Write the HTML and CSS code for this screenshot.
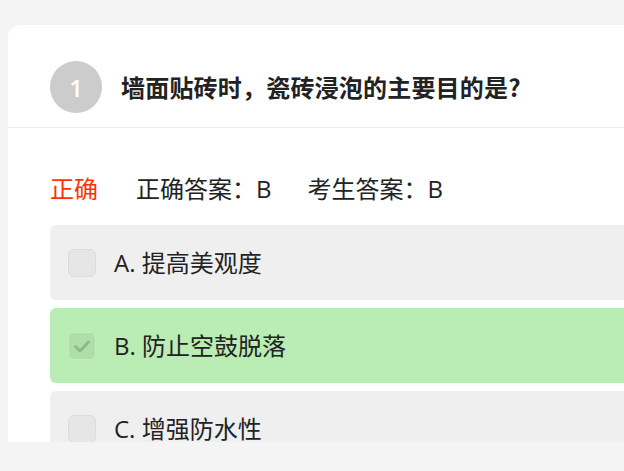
FILE: index.html
```html
<!DOCTYPE html>
<html lang="zh-CN">
<head>
<meta charset="utf-8">
<title>答题结果</title>
<link rel="stylesheet" href="styles.css">
</head>
<body>
<div class="viewport">
  <div class="card">
    <div class="q-head">
      <div class="q-num">1</div>
      <div class="q-title">墙面贴砖时，瓷砖浸泡的主要目的是?</div>
    </div>
    <div class="q-body">
      <div class="status">
        <span class="result">正确</span>
        <span class="answer">正确答案：B</span>
        <span class="answer">考生答案：B</span>
      </div>
      <div class="options">
        <div class="option">
          <span class="box"></span>
          <span class="label">A. 提高美观度</span>
        </div>
        <div class="option correct">
          <span class="box checked">
            <svg width="28" height="28" viewBox="0 0 28 28"><polyline points="7.5,14.5 12,19 20.5,10" fill="none" stroke="#8dbb87" stroke-width="3" stroke-linecap="round" stroke-linejoin="round"/></svg>
          </span>
          <span class="label">B. 防止空鼓脱落</span>
        </div>
        <div class="option">
          <span class="box"></span>
          <span class="label">C. 增强防水性</span>
        </div>
      </div>
    </div>
  </div>
</div>
</body>
</html>
```
FILE: styles.css
```css
html, body {
  margin: 0;
  padding: 0;
  background: #f4f4f4;
  overflow: hidden;
  font-family: "Open Sans", "Noto Sans CJK SC", sans-serif;
  color: #222;
}
.viewport {
  height: 442px;
  overflow: hidden;
  padding: 25px 0 0 8px;
  box-sizing: border-box;
}
.card {
  width: 720px;
  min-height: 600px;
  background: #fff;
  border-radius: 12px;
}
.q-head {
  display: flex;
  align-items: center;
  gap: 19px;
  padding: 36px 42px 14px;
  border-bottom: 1px solid #eeeeee;
}
.q-num {
  width: 52px;
  height: 52px;
  border-radius: 50%;
  background: #cccccc;
  color: #fff;
  font-size: 24px;
  font-weight: 600;
  display: flex;
  align-items: center;
  justify-content: center;
  flex: none;
}
.q-title {
  font-family: "Noto Sans CJK SC", sans-serif;
  font-size: 24px;
  font-weight: 700;
  letter-spacing: 0.2px;
  color: #222;
  line-height: 32px;
}
.q-body {
  padding: 45px 42px 0;
}
.status {
  display: flex;
  align-items: center;
  font-size: 24px;
  line-height: 32px;
  color: #222;
}
.result {
  color: #ff3300;
  margin-right: 38px;
}
.answer {
  margin-right: 36px;
}
.options {
  margin-top: 20px;
  display: flex;
  flex-direction: column;
  gap: 8px;
}
.option {
  height: 75px;
  display: flex;
  align-items: center;
  gap: 18px;
  padding-left: 18px;
  background: #efefef;
  border-radius: 6px;
}
.option.correct {
  background: #b9edb3;
}
.box {
  width: 28px;
  height: 28px;
  box-sizing: border-box;
  border: 1px solid #dcdcdc;
  background: #e6e6e6;
  border-radius: 6px;
  flex: none;
  display: block;
}
.box.checked {
  background: #aedfa8;
  border-color: #c8e8c3;
}
.box svg {
  display: block;
  margin: -1px;
}
.label {
  font-size: 24px;
  line-height: 32px;
  color: #222;
}
```
